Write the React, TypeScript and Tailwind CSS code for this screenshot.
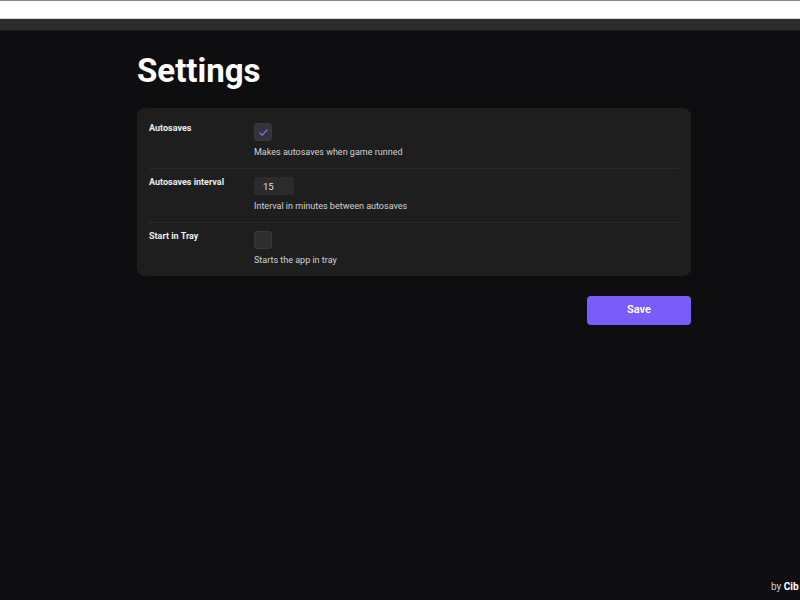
import React, { useState } from 'react';

/**
 * Settings page
 */

interface RowProps {
  label: string;
  description: string;
  last?: boolean;
  children: React.ReactNode;
}

const SettingRow: React.FC<RowProps> = ({ label, description, last, children }) => (
  <div className={`flex pb-[9px] ${last ? 'mb-[2px]' : 'border-b border-[#2a2a2b]'}`}>
    <div className="w-[105px] shrink-0 pt-[6px] text-[9px] font-bold leading-[14px] text-[#ececec]">
      {label}
    </div>
    <div className="flex flex-col gap-1 pt-2">
      <div className="flex h-[18px] items-center">{children}</div>
      <p className="text-[9px] leading-[14px] text-[#d2d2d2]">{description}</p>
    </div>
  </div>
);

const Checkbox: React.FC<{ checked: boolean; onChange: () => void }> = ({ checked, onChange }) => (
  <button
    onClick={onChange}
    className={`flex h-[18px] w-[18px] items-center justify-center rounded-[3px] border border-[#38383b] ${
      checked ? 'bg-[#34323b]' : 'bg-[#2e2e30]'
    }`}
  >
    {checked && (
      <svg className="h-[11px] w-[11px] text-[#8b6cf7]" viewBox="0 0 24 24" fill="none" stroke="currentColor">
        <path d="M4 13l5 5L20 6" strokeWidth="2.5" strokeLinecap="round" strokeLinejoin="round" />
      </svg>
    )}
  </button>
);

const App: React.FC = () => {
  const [autosaves, setAutosaves] = useState(true);
  const [interval, setIntervalValue] = useState('15');
  const [tray, setTray] = useState(false);

  return (
    <div
      className="relative h-[600px] w-[800px] overflow-hidden bg-[#0e0e11]"
      style={{ fontFamily: 'Roboto, "Liberation Sans", sans-serif' }}
    >
      {/* Window chrome */}
      <div className="h-[18px] border-t border-[#8a8a8a] bg-white" />
      <div className="h-px bg-[#d8d8d8]" />
      <div className="h-[11px] bg-[#2b2c2e]" />
      <div className="h-px bg-[#1a1a1c]" />

      <div className="ml-[137px] w-[554px]">
        <h1 className="mt-[20px] text-[33px] font-bold leading-[40px] text-white">Settings</h1>

        <div className="mt-[17px] rounded-lg bg-[#1e1e1f] px-3 pt-[7px]">
          <SettingRow label="Autosaves" description="Makes autosaves when game runned">
            <Checkbox checked={autosaves} onChange={() => setAutosaves(!autosaves)} />
          </SettingRow>
          <SettingRow label="Autosaves interval" description="Interval in minutes between autosaves">
            <input
              value={interval}
              onChange={(e) => setIntervalValue(e.target.value)}
              className="h-[18px] w-10 rounded-[3px] bg-[#2b2b2d] px-[9px] text-[9.5px] text-[#e0e0e0] outline-none"
            />
          </SettingRow>
          <SettingRow label="Start in Tray" description="Starts the app in tray" last>
            <Checkbox checked={tray} onChange={() => setTray(!tray)} />
          </SettingRow>
        </div>

        <div className="mt-5 flex justify-end">
          <button className="h-[29px] w-[104px] rounded bg-[#7a5cf8] text-[11px] font-semibold text-white">
            Save
          </button>
        </div>
      </div>

      {/* Footer credit */}
      <div className="absolute left-[771px] top-[579px] whitespace-nowrap text-[10px] leading-4 text-[#d0d0d0]">
        by <span className="font-bold text-white">Cib</span>
      </div>
    </div>
  );
};

export default App;
